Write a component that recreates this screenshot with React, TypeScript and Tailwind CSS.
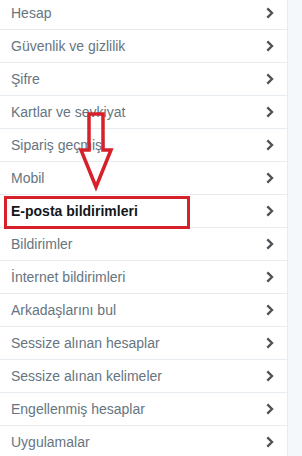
import React from 'react';

const items = [
  'Hesap',
  'Güvenlik ve gizlilik',
  'Şifre',
  'Kartlar ve sevkiyat',
  'Sipariş geçmişi',
  'Mobil',
  'E-posta bildirimleri',
  'Bildirimler',
  'İnternet bildirimleri',
  'Arkadaşlarını bul',
  'Sessize alınan hesaplar',
  'Sessize alınan kelimeler',
  'Engellenmiş hesaplar',
  'Uygulamalar',
];

const Chevron = () => (
  <svg className="h-[12px] w-[8px]" viewBox="0 0 8 12" fill="none">
    <path d="M1.3 1.3 L6 6 L1.3 10.7" stroke="#505457" strokeWidth="2.4" strokeLinejoin="miter" />
  </svg>
);

const App: React.FC = () => {
  return (
    <div className="relative h-[456px] w-[302px] overflow-hidden bg-[#f5f8fa] font-['Liberation_Sans',Arial,sans-serif]">
      <div className="flex h-full">
        <ul className="-mt-[3px] w-[287px] bg-white">
          {items.map((label) => {
            const active = label === 'E-posta bildirimleri';
            return (
              <li
                key={label}
                className="flex h-[33px] items-center justify-between border-b border-[#e6ecf0] pl-[11px] pr-[13px]"
              >
                <span
                  className={
                    active
                      ? 'text-[14px] font-bold text-[#14171a]'
                      : 'text-[14px] text-[#66757f]'
                  }
                >
                  {label}
                </span>
                <Chevron />
              </li>
            );
          })}
        </ul>
        <div className="flex-1 border-l border-[#e6ecf0]" />
      </div>

      {/* annotation: red box + arrow */}
      <div className="absolute left-[4px] top-[196px] h-[33px] w-[186px] border-[3px] border-[#d6202a]" />
      <svg className="absolute left-0 top-0" width="302" height="456" viewBox="0 0 302 456" fill="none">
        <path
          d="M89 114 L103 114 L103 150 L111 150 L96 187 L81 150 L89 150 Z"
          stroke="#d6202a"
          strokeWidth="3.5"
          strokeLinejoin="miter"
        />
      </svg>
    </div>
  );
};

export default App;
